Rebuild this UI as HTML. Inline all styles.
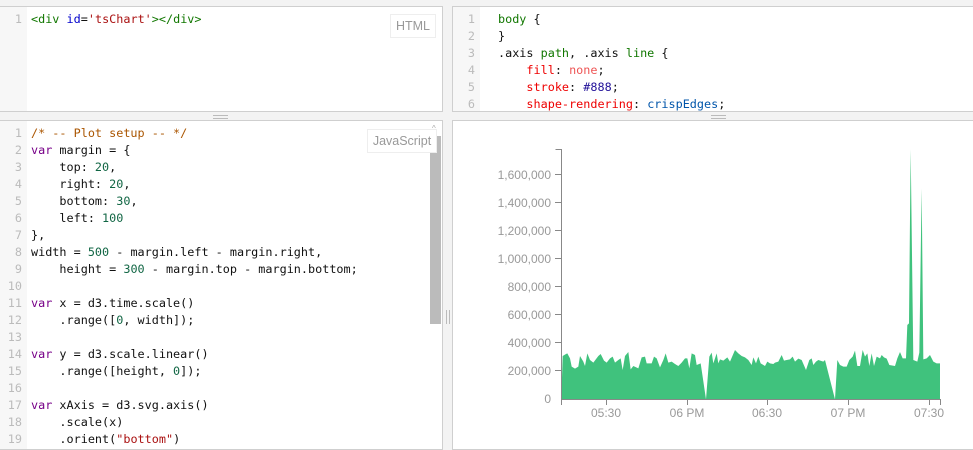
<!DOCTYPE html>
<html><head><meta charset="utf-8"><style>
*{margin:0;padding:0;box-sizing:border-box}
body{width:973px;height:438px;background:#f3f3f3;position:relative;overflow:hidden;font-family:"Liberation Sans",sans-serif}
.p{position:absolute;background:#fff;border:1px solid #cfcfcf;overflow:hidden}
.g{position:absolute;left:0;top:0;bottom:0;background:#f7f7f7}
.code{position:absolute;font-family:"DejaVu Sans Mono","Liberation Mono",monospace;font-size:11.8px;line-height:17px;white-space:pre;color:#111}
.ln{position:absolute;font-family:"DejaVu Sans Mono",monospace;font-size:11.8px;line-height:17px;color:#bbb;text-align:right;white-space:pre}
.lbl{position:absolute;border:1px solid #eee;background:#fff;color:#999;font-size:12.5px;text-align:center;line-height:22px}
.k{color:#708}.n{color:#164}.c{color:#a50}.s{color:#a11}.t{color:#170}.a{color:#00c}.pr{color:#e00}.v{color:#e55}.h{color:#219}.q{color:#05a}
</style></head><body>
<div class="p" style="left:-1px;top:6px;width:444px;height:106px">
 <div class="g" style="width:27px"></div>
 <div class="ln" style="left:0;top:4px;width:22px">1</div>
 <div class="code" style="left:31px;top:4px"><span class="t">&lt;div</span> <span class="a">id</span>=<span class="s">'tsChart'</span><span class="t">&gt;&lt;/div&gt;</span></div>
 <div class="lbl" style="left:390px;top:7px;width:46px;height:24px">HTML</div>
</div>
<div class="p" style="left:452px;top:6px;width:530px;height:106px">
 <div class="g" style="width:27px"></div>
 <div class="ln" style="left:0;top:4px;width:22px">1
2
3
4
5
6</div>
 <div class="code" style="left:45px;top:4px"><span class="t">body</span> {
}
.axis <span class="t">path</span>, .axis <span class="t">line</span> {
    <span class="pr">fill</span>: <span class="v">none</span>;
    <span class="pr">stroke</span>: <span class="h">#888</span>;
    <span class="pr">shape-rendering</span>: <span class="q">crispEdges</span>;</div>
</div>
<div style="position:absolute;left:213px;top:115px;width:15px;height:1px;background:#bbb"></div>
<div style="position:absolute;left:213px;top:118px;width:15px;height:1px;background:#bbb"></div>
<div style="position:absolute;left:711px;top:115px;width:15px;height:1px;background:#bbb"></div>
<div style="position:absolute;left:711px;top:118px;width:15px;height:1px;background:#bbb"></div>
<div style="position:absolute;left:446px;top:310px;width:1px;height:14px;background:#bbb"></div>
<div style="position:absolute;left:449px;top:310px;width:1px;height:14px;background:#bbb"></div>
<div class="p" style="left:-1px;top:120px;width:444px;height:330px">
 <div class="g" style="width:27px"></div>
 <div class="ln" style="left:0;top:4px;width:22px">1
2
3
4
5
6
7
8
9
10
11
12
13
14
15
16
17
18
19</div>
 <div class="code" style="left:31px;top:4px"><span class="c">/* -- Plot setup -- */</span>
<span class="k">var</span> margin = {
    top: <span class="n">20</span>,
    right: <span class="n">20</span>,
    bottom: <span class="n">30</span>,
    left: <span class="n">100</span>
},
width = <span class="n">500</span> - margin.left - margin.right,
    height = <span class="n">300</span> - margin.top - margin.bottom;

<span class="k">var</span> x = d3.time.scale()
    .range([<span class="n">0</span>, width]);

<span class="k">var</span> y = d3.scale.linear()
    .range([height, <span class="n">0</span>]);

<span class="k">var</span> xAxis = d3.svg.axis()
    .scale(x)
    .orient(<span class="s">"bottom"</span>)</div>
 <div style="position:absolute;left:428px;top:0;width:15px;height:330px;background:#fff"></div>
 <div style="position:absolute;left:430px;top:15px;width:11px;height:188px;background:#bbb"></div>
 <div style="position:absolute;left:432px;top:3px;color:#aaa;font-size:8px">^</div>
 <div class="lbl" style="left:367px;top:8px;width:70px;height:24px">JavaScript</div>
</div>
<div class="p" style="left:452px;top:120px;width:530px;height:330px"></div>
<svg style="position:absolute;left:0;top:0" width="973" height="438">
 <g transform="translate(480,140) scale(0.33333)">
  <polygon fill="#40c27d" points="244,777 248,648 258,642 262,640 270,655 275,680 285,686 295,680 300,648 310,665 315,678 322,640 330,660 340,668 355,648 362,642 372,662 380,668 390,655 398,650 405,668 415,660 422,655 428,690 435,648 445,636 452,688 460,678 475,685 485,652 495,650 500,670 515,670 522,650 530,655 540,682 550,660 557,640 565,668 575,665 585,672 595,678 605,668 615,655 622,655 628,685 635,640 645,645 650,675 662,670 678,778 688,650 695,638 700,670 710,640 715,670 720,658 730,662 742,652 750,665 765,630 775,640 785,648 795,652 805,660 815,675 820,652 828,670 835,650 842,670 855,678 862,665 870,670 880,672 885,668 895,665 905,645 912,662 920,660 930,658 938,650 945,665 955,656 965,660 978,690 988,660 995,655 1000,675 1008,665 1015,660 1030,665 1035,660 1065,778 1072,660 1080,675 1090,680 1100,680 1108,660 1118,650 1125,632 1132,678 1140,678 1148,630 1155,650 1162,640 1168,678 1175,640 1182,678 1190,650 1200,655 1205,645 1212,652 1220,656 1228,675 1245,678 1252,655 1260,636 1268,655 1278,655 1282,555 1287,550 1292,28 1300,660 1312,665 1318,638 1325,145 1330,658 1340,655 1350,645 1360,665 1370,670 1380,670 1380,777"/>
 </g>
 <g stroke="#888" fill="none" shape-rendering="crispEdges">
  <path d="M555.5,149.5H561.5V399.5H940.5V405"/>
  <path d="M561.5,399.5V405"/>
  <path d="M555,370.5h6M555,342.5h6M555,314.5h6M555,286.5h6M555,258.5h6M555,230.5h6M555,202.5h6M555,174.5h6"/>
  <path d="M606.5,399v6M687.5,399v6M767.5,399v6M848.5,399v6M929.5,399v6"/>
 </g>
 <g fill="#999" font-family="Liberation Sans, sans-serif" font-size="12" text-anchor="end">
  <text x="551" y="403">0</text><text x="551" y="375">200,000</text><text x="551" y="347">400,000</text><text x="551" y="319">600,000</text><text x="551" y="291">800,000</text><text x="551" y="263">1,000,000</text><text x="551" y="235">1,200,000</text><text x="551" y="207">1,400,000</text><text x="551" y="179">1,600,000</text>
 </g>
 <g fill="#999" font-family="Liberation Sans, sans-serif" font-size="12" text-anchor="middle">
  <text x="606" y="417">05:30</text><text x="687" y="417">06 PM</text><text x="767" y="417">06:30</text><text x="848" y="417">07 PM</text><text x="929" y="417">07:30</text>
 </g>
</svg>
</body></html>
